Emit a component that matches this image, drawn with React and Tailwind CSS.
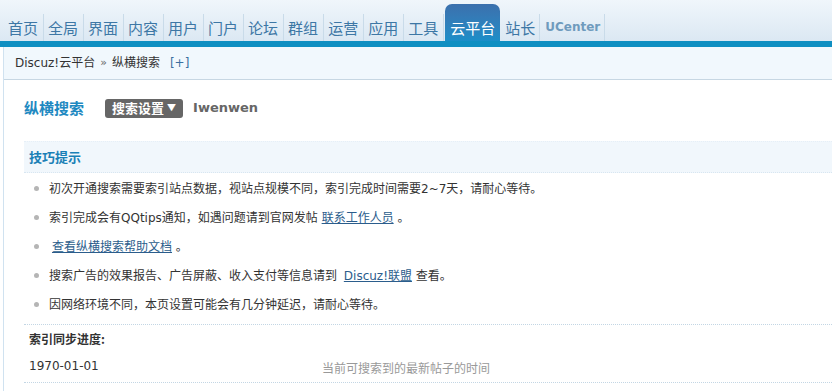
const navItems = ['首页', '全局', '界面', '内容', '用户', '门户', '论坛', '群组', '运营', '应用', '工具'];

const tips = [
  <>初次开通搜索需要索引站点数据，视站点规模不同，索引完成时间需要2~7天，请耐心等待。</>,
  <>
    索引完成会有QQtips通知，如遇问题请到官网发帖 <a className="text-[#2b5d8c] underline">联系工作人员</a> 。
  </>,
  <>
    {' '}
    <a className="ml-[3px] text-[#2b5d8c] underline">查看纵横搜索帮助文档</a> 。
  </>,
  <>
    搜索广告的效果报告、广告屏蔽、收入支付等信息请到 <a className="ml-[3px] text-[#2b5d8c] underline">Discuz!联盟</a> 查看。
  </>,
  <>因网络环境不同，本页设置可能会有几分钟延迟，请耐心等待。</>,
];

export default function App() {
  return (
    <div className="h-[391px] w-[832px] overflow-hidden bg-white font-['DejaVu_Sans','Noto_Sans_CJK_SC',sans-serif] text-[12px] text-[#333]">
      {/* Header nav */}
      <div className="flex h-[41px] items-end bg-gradient-to-b from-[#f0f6fb] to-[#dbe8f3] pl-1 font-['Noto_Sans_CJK_SC',sans-serif]">
        {navItems.map((item) => (
          <a
            key={item}
            className="h-[27px] border-r border-[#c9dbe9] pl-1 pr-[5px] text-[15px] leading-[27px] text-[#3d77a5]"
          >
            {item}
          </a>
        ))}
        <a className="ml-px h-[37px] rounded-t-[7px] bg-gradient-to-b from-[#3b70ad] to-[#1a8ec8] px-[5px] pt-[10px] text-[15px] leading-[27px] text-white">
          云平台
        </a>
        <a className="h-[27px] border-r border-[#c9dbe9] pl-[5px] pr-[4px] text-[15px] leading-[27px] text-[#3d77a5]">站长</a>
        <a className="h-[27px] border-r border-[#c9dbe9] pl-[5px] pr-[4px] font-['DejaVu_Sans',sans-serif] text-[12px] font-bold leading-[27px] text-[#6f9bbd]">
          UCenter
        </a>
      </div>
      <div className="h-[6px] bg-[#0f8fc2]" />

      <div className="ml-[3px] h-full border-l border-[#d0e2f0]">
        {/* Breadcrumb */}
        <div className="flex h-[33px] items-center border-b border-[#c7d7e3] bg-[#f1f8fd] pl-[11px]">
          <span>Discuz!云平台</span>
          <span className="mx-[5px] text-[11px] text-[#666]">»</span>
          <span>纵横搜索</span>
          <span className="ml-[10px] text-[#3b6fa0]">[+]</span>
        </div>

        <div className="pl-5">
          {/* Title row */}
          <div className="mt-[18px] flex h-[20px] items-center">
            <h3 className="font-['Noto_Sans_CJK_SC',sans-serif] text-[15px] font-bold text-[#1f89c1]">纵横搜索</h3>
            <span className="ml-[21px] flex h-[19px] items-center rounded-[3px] bg-[#666] px-[7px] font-['Noto_Sans_CJK_SC',sans-serif] text-[13px] font-bold text-white">
              搜索设置
              <span className="ml-[3px] text-[9px]">▼</span>
            </span>
            <span className="ml-[10px] text-[13px] font-bold text-[#666]">Iwenwen</span>
          </div>

          {/* Tips */}
          <div className="mt-[23px] flex h-[32px] items-center border-t border-[#e6eff7] border-b border-b-[#d8e6f1] border-dotted bg-[#f1f7fc] pl-[5px]">
            <span className="font-['Noto_Sans_CJK_SC',sans-serif] text-[13px] font-bold text-[#1a80b6]">技巧提示</span>
          </div>
          <ul>
            {tips.map((tip, i) => (
              <li key={i} className="flex h-[29px] items-center pl-[10px] pt-[2px]">
                <span className="mr-[10px] h-[5px] w-[5px] rounded-full bg-[#b5b5b5]" />
                <span>{tip}</span>
              </li>
            ))}
          </ul>

          {/* Sync progress */}
          <div className="mt-[6px] border-t border-dotted border-[#c3d6e4]">
            <div className="flex h-[27px] items-center pl-[5px] font-['Noto_Sans_CJK_SC',sans-serif] font-bold">
              索引同步进度:
            </div>
            <div className="flex h-[31px] items-start border-b border-dotted border-[#c3d6e4] pl-[5px] pt-[5px]">
              <span className="w-[293px]">1970-01-01</span>
              <span className="mt-[3px] text-[#999]">当前可搜索到的最新帖子的时间</span>
            </div>
          </div>
        </div>
      </div>
    </div>
  );
}
